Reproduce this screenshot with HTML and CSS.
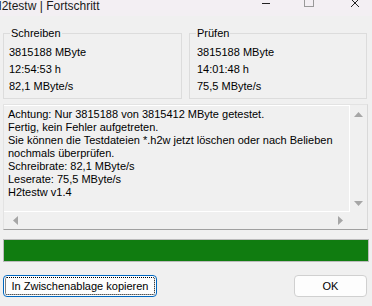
FILE: index.html
```html
<!DOCTYPE html>
<html lang="de">
<head>
<meta charset="utf-8">
<title>H2testw | Fortschritt</title>
<link rel="stylesheet" href="styles.css">
</head>
<body>
<div class="window">
  <div class="titlebar">
    <span class="title">H2testw | Fortschritt</span>
    <svg class="controls" width="120" height="16" viewBox="0 0 120 16">
      <line x1="10" y1="3.5" x2="18" y2="3.5" stroke="#222" stroke-width="1"/>
      <rect x="52.5" y="-3.5" width="9" height="10" fill="none" stroke="#999" stroke-width="1"/>
      <line x1="99" y1="-1" x2="107" y2="7" stroke="#222" stroke-width="1"/>
      <line x1="107" y1="-1" x2="99" y2="7" stroke="#222" stroke-width="1"/>
    </svg>
  </div>

  <div class="groups">
    <fieldset class="group group-left">
      <legend>Schreiben</legend>
      <div class="vals">
        <div>3815188 MByte</div>
        <div>12:54:53 h</div>
        <div>82,1 MByte/s</div>
      </div>
    </fieldset>
    <fieldset class="group group-right">
      <legend>Prüfen</legend>
      <div class="vals">
        <div>3815188 MByte</div>
        <div>14:01:48 h</div>
        <div>75,5 MByte/s</div>
      </div>
    </fieldset>
  </div>

  <div class="log">
    <div class="log-text">Achtung: Nur 3815188 von 3815412 MByte getestet.
Fertig, kein Fehler aufgetreten.
Sie können die Testdateien *.h2w jetzt löschen oder nach Belieben
nochmals überprüfen.
Schreibrate: 82,1 MByte/s
Leserate: 75,5 MByte/s
H2testw v1.4</div>
    <div class="vscroll">
      <svg width="9" height="5" viewBox="0 0 9 5"><polygon points="0,5 9,5 4.5,0" fill="#a6a6a6"/></svg>
      <svg width="9" height="5" viewBox="0 0 9 5"><polygon points="0,0 9,0 4.5,5" fill="#a6a6a6"/></svg>
    </div>
    <div class="hscroll">
      <svg width="5" height="9" viewBox="0 0 5 9"><polygon points="5,0 5,9 0,4.5" fill="#a6a6a6"/></svg>
      <svg width="5" height="9" viewBox="0 0 5 9"><polygon points="0,0 0,9 5,4.5" fill="#a6a6a6"/></svg>
    </div>
    <div class="corner"></div>
  </div>

  <div class="progress"><div class="bar" style="width:100%"></div></div>

  <div class="buttons">
    <button class="btn btn-copy">In Zwischenablage kopieren</button>
    <button class="btn btn-ok">OK</button>
  </div>
</div>
</body>
</html>
```

FILE: styles.css
```css
html, body {
  margin: 0;
  padding: 0;
}
body {
  width: 372px;
  height: 306px;
  overflow: hidden;
  background: #f0f0f0;
  font-family: "Liberation Sans", Arial, sans-serif;
  font-size: 11px;
  color: #000;
}
.window {
  display: flex;
  flex-direction: column;
  height: 306px;
}
.titlebar {
  height: 16px;
  background: #f3eff3;
  display: flex;
  align-items: flex-start;
  overflow: hidden;
  flex: none;
}
.title {
  margin-left: -7px;
  font-size: 12px;
  line-height: 12px;
  color: #1a1a1a;
  white-space: nowrap;
}
.controls {
  margin-left: auto;
  display: block;
}
.groups {
  display: flex;
  gap: 7px;
  padding: 11px 5px 0 3px;
  flex: none;
}
.group {
  margin: 0;
  border: 1px solid #dcdcdc;
  padding: 0 0 3px 6px;
  min-width: 0;
}
.group-left { width: 179px; box-sizing: border-box; }
.group-right { width: 178px; box-sizing: border-box; }
.group legend {
  padding: 0 1px;
  line-height: 13px;
}
.vals {
  margin-top: 4px;
  line-height: 17px;
}
.group-left .vals { margin-left: -1px; }
.group-right .vals { margin-left: 1px; }

.log {
  margin: 5px 4px 0 3px;
  height: 126px;
  box-sizing: border-box;
  border-style: solid;
  border-width: 1px;
  border-color: #e3e3e3 #d9d9d9 #a0a0a0 #e3e3e3;
  display: grid;
  grid-template-columns: 1fr 17px;
  grid-template-rows: 1fr 17px;
  flex: none;
}
.log-text {
  white-space: pre;
  line-height: 13px;
  padding: 2px 0 0 4px;
  overflow: hidden;
  border-right: 1px solid #fff;
  border-bottom: 1px solid #fff;
  border-top: 1px solid #fff;
}
.vscroll {
  display: flex;
  flex-direction: column;
  align-items: center;
  justify-content: space-between;
  padding: 7px 0 6px;
}
.hscroll {
  display: flex;
  align-items: center;
  justify-content: space-between;
  padding: 0 7px 0 9px;
}
.progress {
  margin: 9px 3px 0 3px;
  height: 23px;
  box-sizing: border-box;
  border: 1px solid #bcbcbc;
  background: #e6e6e6;
  flex: none;
}
.bar {
  height: 100%;
  background: #107c10;
}
.buttons {
  display: flex;
  justify-content: space-between;
  padding: 0 5px 0 3px;
  margin-top: 13px;
  flex: none;
}
.btn {
  height: 22px;
  box-sizing: border-box;
  font-family: "Liberation Sans", Arial, sans-serif;
  font-size: 11px;
  color: #000;
  background: #fdfdfd;
  border-radius: 4px;
  padding: 0;
  margin: 0;
}
.btn-copy {
  width: 154px;
  border: 1px solid #0067c0;
  outline: 1px dotted #000;
  outline-offset: -3px;
}
.btn-ok {
  width: 73px;
  border: 1px solid #d0d0d0;
}
```
